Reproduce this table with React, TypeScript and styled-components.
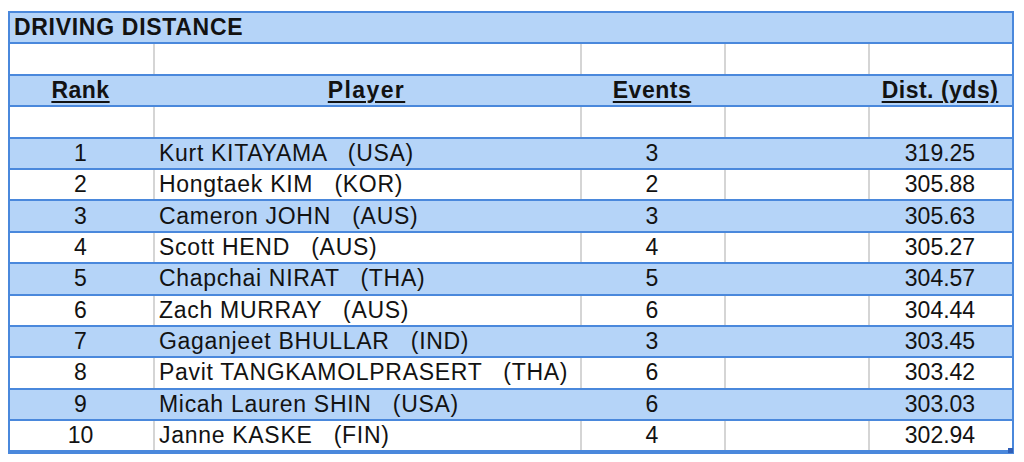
import { createGlobalStyle, styled } from 'styled-components';

const GlobalStyle = createGlobalStyle`
  body {
    margin: 0;
    background: #ffffff;
    font-family: 'Liberation Sans', Arial, sans-serif;
    color: #121212;
  }
`;

const Page = styled.div`
  padding: 11px 10px 0 8px;
`;

const Sheet = styled.div`
  position: relative;
  width: 1006px;
  box-sizing: border-box;
  border: 2px solid #4a88dc;
`;

const Row = styled.div<{ $blue?: boolean }>`
  display: grid;
  grid-template-columns: 143px 427px 144px 144px 144px;
  height: 31.4px;
  box-sizing: border-box;
  background: ${({ $blue }) => ($blue ? '#b5d4f8' : '#ffffff')};
  border-bottom: 2px solid #4a88dc;
  &:last-child {
    border-bottom: none;
  }
`;

const TitleRow = styled(Row)`
  grid-template-columns: 1fr;
`;

const Cell = styled.div<{ $align?: 'left' | 'center'; $rule?: boolean; $wide?: boolean }>`
  display: flex;
  align-items: center;
  justify-content: ${({ $align }) => ($align === 'left' ? 'flex-start' : 'center')};
  padding: 0 6px 0 4px;
  font-size: 23px;
  letter-spacing: ${({ $wide }) => ($wide ? '0.7px' : '0')};
  white-space: pre;
  overflow: hidden;
  border-left: 2px solid ${({ $rule }) => ($rule ? '#d5d5d5' : 'transparent')};
  &:first-child {
    border-left: none;
  }
`;

const Title = styled(Cell)`
  font-weight: bold;
  padding-left: 4px;
`;

const HeadLabel = styled.span<{ $wide?: boolean }>`
  font-weight: bold;
  letter-spacing: ${({ $wide }) => ($wide ? '1.4px' : '0.5px')};
  text-decoration: underline;
  text-decoration-thickness: 2px;
  text-underline-offset: 3px;
`;

const Handle = styled.div`
  position: absolute;
  right: -1px;
  bottom: -1px;
  width: 5px;
  height: 5px;
  background: #2f5fb8;
`;

const players = [
  { rank: 1, name: 'Kurt KITAYAMA', country: 'USA', events: 3, dist: '319.25' },
  { rank: 2, name: 'Hongtaek KIM', country: 'KOR', events: 2, dist: '305.88' },
  { rank: 3, name: 'Cameron JOHN', country: 'AUS', events: 3, dist: '305.63' },
  { rank: 4, name: 'Scott HEND', country: 'AUS', events: 4, dist: '305.27' },
  { rank: 5, name: 'Chapchai NIRAT', country: 'THA', events: 5, dist: '304.57' },
  { rank: 6, name: 'Zach MURRAY', country: 'AUS', events: 6, dist: '304.44' },
  { rank: 7, name: 'Gaganjeet BHULLAR', country: 'IND', events: 3, dist: '303.45' },
  { rank: 8, name: 'Pavit TANGKAMOLPRASERT', country: 'THA', events: 6, dist: '303.42' },
  { rank: 9, name: 'Micah Lauren SHIN', country: 'USA', events: 6, dist: '303.03' },
  { rank: 10, name: 'Janne KASKE', country: 'FIN', events: 4, dist: '302.94' },
];

const EmptyRow = () => (
  <Row>
    {[0, 1, 2, 3, 4].map((i) => (
      <Cell key={i} $rule />
    ))}
  </Row>
);

const App = () => {
  return (
    <Page>
      <GlobalStyle />
      <Sheet>
        <TitleRow $blue>
          <Title $align="left" $wide>DRIVING DISTANCE</Title>
        </TitleRow>
        <EmptyRow />
        <Row $blue>
          <Cell><HeadLabel>Rank</HeadLabel></Cell>
          <Cell><HeadLabel $wide>Player</HeadLabel></Cell>
          <Cell><HeadLabel>Events</HeadLabel></Cell>
          <Cell />
          <Cell><HeadLabel>Dist. (yds)</HeadLabel></Cell>
        </Row>
        <EmptyRow />
        {players.map((p) => {
          const blue = p.rank % 2 === 1;
          return (
            <Row key={p.rank} $blue={blue}>
              <Cell $rule={!blue}>{p.rank}</Cell>
              <Cell $rule={!blue} $align="left" $wide>{`${p.name}   (${p.country})`}</Cell>
              <Cell $rule={!blue}>{p.events}</Cell>
              <Cell $rule={!blue} />
              <Cell $rule={!blue}>{p.dist}</Cell>
            </Row>
          );
        })}
        <Handle />
      </Sheet>
    </Page>
  );
};

export default App;
